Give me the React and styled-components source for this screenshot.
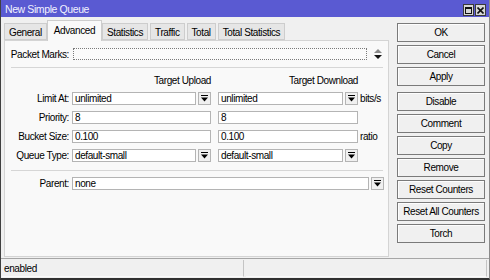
import React from 'react';
import styled, { createGlobalStyle } from 'styled-components';

const FONT = `"Liberation Sans", Arial, sans-serif`;

const GlobalStyle = createGlobalStyle`
  html, body {
    margin: 0;
    padding: 0;
    background: #f0f0f0;
  }
  body {
    font-family: ${FONT};
    font-size: 10px;
    letter-spacing: -0.4px;
    color: #000;
  }
`;

const Window = styled.div`
  width: 490px;
  height: 280px;
  box-sizing: border-box;
  display: flex;
  flex-direction: column;
  background: #f0f0f0;
  border-left: 1px solid #404040;
  border-right: 1px solid #8a8a8a;
  border-bottom: 2px solid #303030;
  overflow: hidden;
`;

const TitleBar = styled.div`
  height: 17px;
  flex: none;
  display: flex;
  align-items: center;
  justify-content: space-between;
  background: #5a5ad2;
  color: #f2f2ff;
  font-size: 10.5px;
  padding: 0 4px 0 5px;
  margin-left: -1px;
  margin-right: -1px;
`;

const TitleButtons = styled.div`
  display: flex;
  gap: 1px;
  margin-top: 3px;
`;

const TitleButton = styled.div`
  width: 11px;
  height: 12px;
  box-sizing: border-box;
  border: 1px solid #3a3a3a;
  background: #d6d6d6;
  display: flex;
  align-items: center;
  justify-content: center;
`;

const Body = styled.div`
  flex: 1;
  display: flex;
  min-height: 0;
`;

const Main = styled.div`
  width: 385px;
  display: flex;
  flex-direction: column;
  padding: 3px 0 1px 3px;
`;

const TabRow = styled.div`
  display: flex;
  align-items: flex-end;
  height: 20px;
  position: relative;
  z-index: 1;
`;

const Tab = styled.div`
  box-sizing: border-box;
  height: ${p => (p.$active ? '21px' : '17px')};
  margin-bottom: ${p => (p.$active ? '-1px' : '0')};
  margin-right: ${p => (p.$active ? '0' : '2px')};
  margin-left: ${p => (p.$active ? '-2px' : '0')};
  padding: ${p => (p.$active ? '3px 6px 0' : '2px 4px 0')};
  border: 1px solid #cdcdcd;
  border-bottom: ${p => (p.$active ? 'none' : '1px solid #cdcdcd')};
  background: ${p => (p.$active ? '#f9f9f9' : '#e6e6e6')};
  white-space: nowrap;
  line-height: 13px;
`;

const Panel = styled.div`
  flex: 1;
  border: 1px solid #d4d4d4;
  background: #f9f9f9;
  padding: 7px 0 0 1px;
  display: flex;
  flex-direction: column;
`;

const Row = styled.div`
  display: flex;
  align-items: center;
  height: ${p => p.$h || 13}px;
  margin-top: ${p => p.$top || 0}px;
`;

const Label = styled.div`
  width: 63px;
  flex: none;
  text-align: right;
  padding-right: 3px;
  white-space: nowrap;
`;

const Field = styled.div`
  box-sizing: border-box;
  width: ${p => p.$w}px;
  height: 13px;
  flex: none;
  border: 1px solid #b4b4b4;
  background: #fff;
  padding: 0 2px;
  line-height: 11px;
  white-space: nowrap;
  overflow: hidden;
  margin-right: ${p => p.$gap || 0}px;
`;

const MarksField = styled(Field)`
  height: 12px;
  border: 1px dotted #7a7a7a;
  background: #fbfbfb;
  margin-left: 1px;
`;

const DropButton = styled.div`
  box-sizing: border-box;
  width: 13px;
  height: 13px;
  flex: none;
  margin-left: 2px;
  margin-right: ${p => p.$gap || 0}px;
  border: 1px solid #b4b4b4;
  background: #f0f0f0;
  display: flex;
  align-items: center;
  justify-content: center;
`;

const Unit = styled.div`
  margin-left: 2px;
  white-space: nowrap;
`;

const Spinner = styled.div`
  margin-left: 7px;
  display: flex;
  align-items: center;
`;

const Separator = styled.div`
  height: 1px;
  background: #d6d6d6;
  margin: ${p => p.$top}px 5px 0 5px;
`;

const HeaderRow = styled.div`
  display: flex;
  margin-top: 7px;
  height: 12px;
  line-height: 12px;
`;

const HeaderCell = styled.div`
  width: ${p => p.$w}px;
  text-align: right;
  white-space: nowrap;
`;

const Side = styled.div`
  flex: 1;
  display: flex;
  flex-direction: column;
  padding: 6px 0 0 8px;
  gap: 3px;
`;

const Button = styled.div`
  box-sizing: border-box;
  width: 88px;
  height: 19px;
  border: 1px solid #7a7a7a;
  box-shadow: inset 1px 1px 0 #fdfdfd;
  background: #f0f0f0;
  display: flex;
  align-items: center;
  justify-content: center;
  white-space: nowrap;
  margin-top: ${p => p.$top || 0}px;
`;

const StatusBar = styled.div`
  height: 20px;
  flex: none;
  box-sizing: border-box;
  display: flex;
  border-top: 1px solid #a6a6a6;
  padding: 1px 2px 1px 1px;
  gap: 2px;
`;

const StatusCell = styled.div`
  box-sizing: border-box;
  width: ${p => (p.$w ? `${p.$w}px` : 'auto')};
  flex: ${p => (p.$w ? 'none' : '1')};
  border-right: 1px solid #c4c4c4;
  border-bottom: 1px solid #fafafa;
  padding-left: 2px;
  display: flex;
  align-items: center;
`;

const DropIcon = () => (
  <svg width="7" height="7" viewBox="0 0 7 7">
    <rect x="0" y="0" width="7" height="1" fill="#000" />
    <path d="M0 2.5 H7 L3.5 6.5 Z" fill="#000" />
  </svg>
);

const SpinIcon = () => (
  <svg width="8" height="10" viewBox="0 0 8 10">
    <path d="M0 4 L4 0 L8 4 Z" fill="#8a8a8a" />
    <path d="M0 6 H8 L4 10 Z" fill="#111" />
  </svg>
);

const MaxIcon = () => (
  <svg width="7" height="7" viewBox="0 0 7 7">
    <rect x="0.5" y="0.5" width="6" height="6" fill="none" stroke="#111" />
    <rect x="0" y="0" width="7" height="2" fill="#111" />
  </svg>
);

const CloseIcon = () => (
  <svg width="7" height="7" viewBox="0 0 7 7">
    <path d="M0.5 0.5 L6.5 6.5 M6.5 0.5 L0.5 6.5" stroke="#111" strokeWidth="1.6" />
  </svg>
);

const tabs = ['General', 'Advanced', 'Statistics', 'Traffic', 'Total', 'Total Statistics'];

const buttons = [
  ['OK', 0],
  ['Cancel', 0],
  ['Apply', 0],
  ['Disable', 3],
  ['Comment', 0],
  ['Copy', 0],
  ['Remove', 0],
  ['Reset Counters', 0],
  ['Reset All Counters', 0],
  ['Torch', 0],
];

const App = () => (
  <>
    <GlobalStyle />
    <Window>
      <TitleBar>
        <span>New Simple Queue</span>
        <TitleButtons>
          <TitleButton><MaxIcon /></TitleButton>
          <TitleButton><CloseIcon /></TitleButton>
        </TitleButtons>
      </TitleBar>
      <Body>
        <Main>
          <TabRow>
            {tabs.map(t => (
              <Tab key={t} $active={t === 'Advanced'}>{t}</Tab>
            ))}
          </TabRow>
          <Panel>
            <Row $h={12}>
              <Label>Packet Marks:</Label>
              <MarksField $w={294} />
              <Spinner><SpinIcon /></Spinner>
            </Row>
            <Separator $top={7} />
            <HeaderRow>
              <HeaderCell $w={205}>Target Upload</HeaderCell>
              <HeaderCell $w={147}>Target Download</HeaderCell>
            </HeaderRow>
            <Row $top={5}>
              <Label>Limit At:</Label>
              <Field $w={124}>unlimited</Field>
              <DropButton $gap={7}><DropIcon /></DropButton>
              <Field $w={125}>unlimited</Field>
              <DropButton><DropIcon /></DropButton>
              <Unit>bits/s</Unit>
            </Row>
            <Row $top={6}>
              <Label>Priority:</Label>
              <Field $w={139} $gap={7}>8</Field>
              <Field $w={140}>8</Field>
            </Row>
            <Row $top={6}>
              <Label>Bucket Size:</Label>
              <Field $w={139} $gap={7}>0.100</Field>
              <Field $w={140}>0.100</Field>
              <Unit>ratio</Unit>
            </Row>
            <Row $top={6}>
              <Label>Queue Type:</Label>
              <Field $w={124}>default-small</Field>
              <DropButton $gap={7}><DropIcon /></DropButton>
              <Field $w={125}>default-small</Field>
              <DropButton><DropIcon /></DropButton>
            </Row>
            <Separator $top={8} />
            <Row $top={6}>
              <Label>Parent:</Label>
              <Field $w={297}>none</Field>
              <DropButton><DropIcon /></DropButton>
            </Row>
          </Panel>
        </Main>
        <Side>
          {buttons.map(([label, top]) => (
            <Button key={label} $top={top}>{label}</Button>
          ))}
        </Side>
      </Body>
      <StatusBar>
        <StatusCell $w={242}>enabled</StatusCell>
        <StatusCell />
      </StatusBar>
    </Window>
  </>
);

export default App;
